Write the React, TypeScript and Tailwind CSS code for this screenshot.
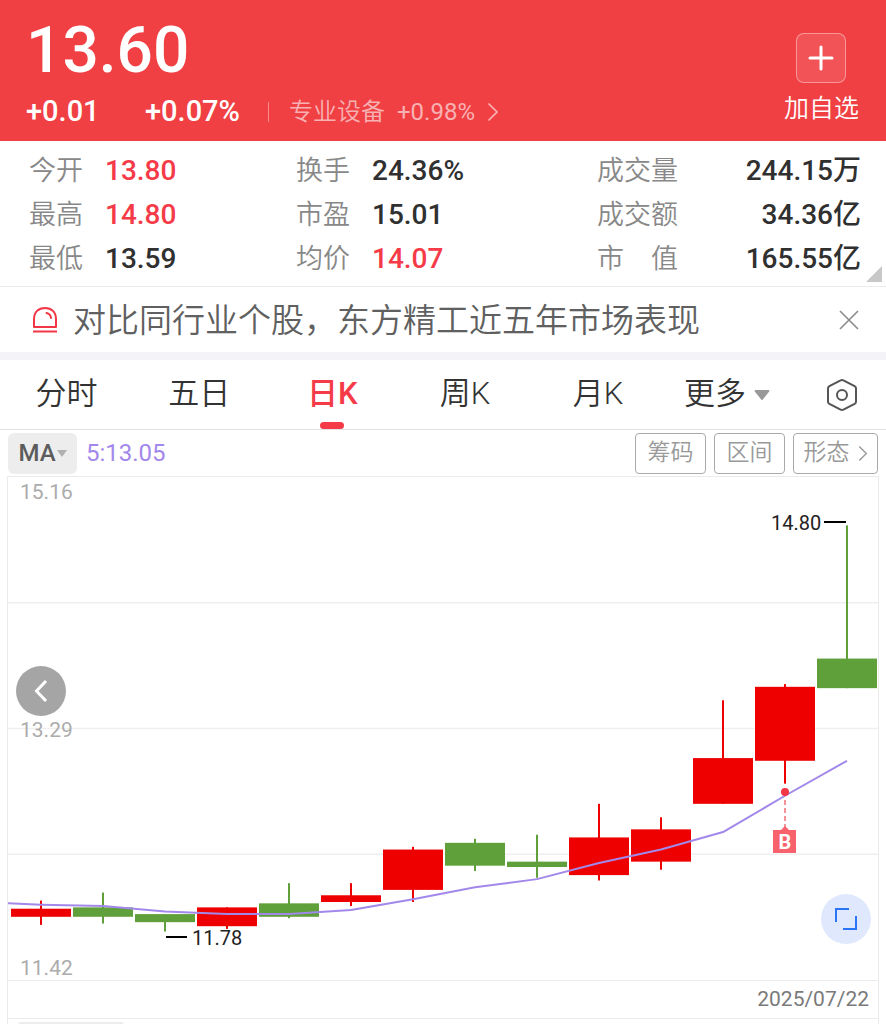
import { useState } from 'react'

interface Candle {
  open: number
  close: number
  high: number
  low: number
}

interface Quote {
  label: string
  value: string
  up?: boolean
}

const QUOTES: Quote[][] = [
  [
    { label: '今开', value: '13.80', up: true },
    { label: '最高', value: '14.80', up: true },
    { label: '最低', value: '13.59' },
  ],
  [
    { label: '换手', value: '24.36%' },
    { label: '市盈', value: '15.01' },
    { label: '均价', value: '14.07', up: true },
  ],
  [
    { label: '成交量', value: '244.15万' },
    { label: '成交额', value: '34.36亿' },
    { label: '市 值', value: '165.55亿' },
  ],
]

const TABS = ['分时', '五日', '日K', '周K', '月K']

const CANDLES: Candle[] = [
  { open: 11.89, close: 11.95, high: 12.01, low: 11.83 },
  { open: 11.96, close: 11.89, high: 12.07, low: 11.84 },
  { open: 11.91, close: 11.85, high: 11.91, low: 11.78 },
  { open: 11.82, close: 11.96, high: 11.96, low: 11.8 },
  { open: 11.99, close: 11.89, high: 12.14, low: 11.88 },
  { open: 12.0, close: 12.05, high: 12.14, low: 11.97 },
  { open: 12.09, close: 12.39, high: 12.41, low: 12.0 },
  { open: 12.44, close: 12.27, high: 12.47, low: 12.23 },
  { open: 12.3, close: 12.26, high: 12.5, low: 12.18 },
  { open: 12.2, close: 12.48, high: 12.73, low: 12.16 },
  { open: 12.3, close: 12.54, high: 12.63, low: 12.24 },
  { open: 12.73, close: 13.07, high: 13.5, low: 12.73 },
  { open: 13.05, close: 13.6, high: 13.62, low: 12.88 },
  { open: 13.81, close: 13.59, high: 14.8, low: 13.59 },
]

const MA5 = [
  11.98, 11.97, 11.93, 11.91, 11.91, 11.94, 12.02, 12.11, 12.17, 12.29, 12.39, 12.52, 12.79, 13.05,
]

// Price scale: 15.16 at the top edge, 11.42 at the bottom one
const CHART_W = 870
const CHART_H = 503
const MAX = 15.16
const MIN = 11.42
const STEP = 62

const y = (price: number) => ((MAX - price) / (MAX - MIN)) * CHART_H
const x = (i: number) => 33 + i * STEP

function KLineChart() {
  const line = MA5.map((p, i) => `${x(i)},${y(p)}`).join(' ')

  return (
    <svg
      viewBox={`0 0 ${CHART_W} ${CHART_H}`}
      className="block w-full h-auto"
      role="img"
      aria-label="日K"
    >
      {[0.25, 0.5, 0.75].map((r) => (
        <line key={r} x1="0" x2={CHART_W} y1={CHART_H * r} y2={CHART_H * r} stroke="#efefef" strokeWidth="1.5" />
      ))}

      <g className="font-['Roboto',sans-serif] text-[21px]" fill="#acacac">
        <text x="12" y="22">15.16</text>
        <text x="12" y="260">13.29</text>
        <text x="12" y="498">11.42</text>
      </g>

      {CANDLES.map((c, i) => {
        const color = c.close > c.open ? '#ee0000' : '#5fa03a'
        const top = y(Math.max(c.open, c.close))
        const bottom = y(Math.min(c.open, c.close))
        return (
          <g key={i} fill={color}>
            <rect x={x(i) - 1} y={y(c.high)} width="2" height={y(c.low) - y(c.high)} />
            <rect x={x(i) - 30} y={top} width="60" height={bottom - top} />
          </g>
        )
      })}

      <polyline points={`0,${y(11.99)} ${line}`} fill="none" stroke="#a288ea" strokeWidth="2" strokeLinejoin="round" />

      {/* High / low callouts */}
      <g className="font-['Roboto',sans-serif] text-[20px]" fill="#222">
        <text x="763" y="53">14.80</text>
        <rect x="816" y="44" width="22" height="2" fill="#000" />
        <text x="184" y="468">11.78</text>
        <rect x="158" y="459" width="21" height="2" fill="#000" />
      </g>

      {/* Buy marker */}
      <circle cx="777" cy="315" r="4" fill="#f23645" />
      <line x1="777" x2="777" y1="323" y2="351" stroke="#f4727b" strokeWidth="1.5" strokeDasharray="5 3" />
      <path d="M766 353h7l4-4 4 4h7v23h-23v-23z" fill="#f8626c" />
      <text x="777" y="372" textAnchor="middle" fill="#fff" className="font-['Roboto',sans-serif] text-[20px] font-bold">
        B
      </text>
    </svg>
  )
}

function BellIcon() {
  return (
    <svg viewBox="0 0 26 28" className="w-[26px] h-7 shrink-0" fill="none" stroke="#f23645" strokeWidth="2">
      <path d="M2 21V13C2 6 6.500 2 13 2s11 4 11 11v8z" strokeLinejoin="round" />
      <path d="M14.500 7c3 .6 4.200 2.300 4.500 5" strokeLinecap="round" />
      <path d="M1 25.500h24" />
    </svg>
  )
}

function Chevron({ className }: { className: string }) {
  return (
    <svg viewBox="0 0 12 20" className={className} fill="none" stroke="currentColor" strokeWidth="1.7">
      <path d="M1.500 1.500 10 10l-8.500 8.500" />
    </svg>
  )
}

export default function App() {
  const [tab, setTab] = useState('日K')
  const [showNotice, setShowNotice] = useState(true)

  return (
    <div className="bg-white font-['Roboto','Noto_Sans_CJK_SC',sans-serif] text-[#333]">
      {/* Price header */}
      <header className="flex justify-between bg-[#f04043] text-white pl-[26px] pr-[27px] h-[141px]">
        <div>
          <h1 className="text-[64px] leading-[66px] font-medium pt-[18px]">13.60</h1>
          <div className="flex items-center h-10 mt-2 text-[29px] font-medium">
            <span className="w-[119px]">+0.01</span>
            <span>+0.07%</span>
            <span className="w-px h-5 bg-white/40 ml-7 mr-5" />
            <a href="#sector" className="flex items-center text-2xl font-[350] text-white/60">
              专业设备
              <span className="ml-3 font-normal">+0.98%</span>
              <Chevron className="w-3 h-5 ml-3" />
            </a>
          </div>
        </div>
        <button className="flex flex-col items-center pt-[33px] text-[25px] leading-[52px] font-[350]">
          <span className="flex items-center justify-center size-[50px] rounded-lg border border-white/40 bg-white/10">
            <svg viewBox="0 0 26 26" className="size-[26px]" stroke="currentColor" strokeWidth="3" strokeLinecap="round">
              <path d="M13 2v22M2 13h22" />
            </svg>
          </span>
          加自选
        </button>
      </header>

      {/* Quote stats */}
      <section className="relative grid grid-cols-[267fr_301fr_264fr] pl-[29px] pr-[25px] pt-2 pb-[5px] border-b border-[#ebebeb]">
        {QUOTES.map((col, n) => (
          <dl key={n}>
            {col.map((q) => (
              <div key={q.label} className={n === 2 ? 'flex justify-between items-center h-11' : 'flex gap-[22px] items-center h-11'}>
                <dt className="text-[27px] leading-10 font-[350] text-[#888]">
                  {q.label.includes(' ') ? (
                    <span className="flex gap-[27px]">
                      {q.label.split(' ').map((s) => (
                        <span key={s}>{s}</span>
                      ))}
                    </span>
                  ) : (
                    q.label
                  )}
                </dt>
                <dd className={q.up ? 'text-[28px] font-medium text-[#f53b48]' : 'text-[28px] font-medium text-[#303030]'}>
                  {q.value}
                </dd>
              </div>
            ))}
          </dl>
        ))}
        <svg viewBox="0 0 16 16" className="absolute right-1 bottom-1 size-4" fill="#c8c8c8">
          <path d="M16 0v16H0z" />
        </svg>
      </section>

      {/* Notice */}
      {showNotice && (
        <div className="flex items-center h-[65px] pl-8 pr-[27px]">
          <BellIcon />
          <a href="#notice" className="ml-[15px] flex-1 pt-[2px] text-[33px] font-[350] text-[#606060]">
            对比同行业个股，东方精工近五年市场表现
          </a>
          <button aria-label="关闭" onClick={() => setShowNotice(false)}>
            <svg viewBox="0 0 20 20" className="size-5" stroke="#8a8a8a" strokeWidth="1.6">
              <path d="M1 1l18 18M19 1 1 19" />
            </svg>
          </button>
        </div>
      )}
      <div className="h-2 bg-[#f3f3f8]" />

      {/* Period tabs */}
      <nav className="grid grid-cols-[3fr_3fr_3fr_3fr_3fr_3fr_2fr] h-[70px] border-b border-[#e2e2e2] text-[31px] font-[350]">
        {TABS.map((t) => (
          <button
            key={t}
            onClick={() => setTab(t)}
            className={t === tab ? 'relative font-medium text-[#f53b48]' : 'relative text-[#333]'}
          >
            {t}
            {t === tab && (
              <span className="absolute bottom-0 left-1/2 -translate-x-1/2 w-6 h-[7px] rounded-full bg-[#f53b48]" />
            )}
          </button>
        ))}
        <button className="flex items-center justify-center gap-2 pr-2">
          更多
          <svg viewBox="0 0 16 12" className="w-4 h-3" fill="#999">
            <path d="M1.500 1h13a1 1 0 0 1 .7 1.600L8.800 10.500a1 1 0 0 1-1.600 0L.8 2.600A1 1 0 0 1 1.500 1z" />
          </svg>
        </button>
        <button aria-label="设置" className="flex items-center justify-center">
          <svg viewBox="0 0 32 34" className="w-8 h-[34px]" fill="none" stroke="#555" strokeWidth="2">
            <path d="M14.600 2.400 3.400 8.200Q2 9 2 10.600v12.800Q2 25 3.400 25.800l11.200 5.800q1.400.7 2.800 0l11.200-5.800Q30 25 30 23.400V10.600Q30 9 28.600 8.200L17.400 2.400q-1.400-.7-2.800 0z" />
            <circle cx="16" cy="17" r="5" />
          </svg>
        </button>
      </nav>

      {/* Indicator bar */}
      <div className="flex items-center h-[46px] pl-2 pr-2">
        <button className="flex items-center justify-center gap-px w-[69px] h-[41px] rounded-md bg-[#ededed] text-2xl font-medium text-[#5c5c5c]">
          MA
          <svg viewBox="0 0 10 7" className="w-[10px] h-[7px]" fill="#b0b0b0">
            <path d="M0 0h10L5 7z" />
          </svg>
        </button>
        <span className="ml-[9px] text-2xl text-[#a288ea]">5:13.05</span>
        <div className="flex gap-2 ml-auto text-[23px] font-[350] text-[#999]">
          <button className="w-[71px] h-[41px] rounded border border-[#aaa]">筹码</button>
          <button className="w-[71px] h-[41px] rounded border border-[#aaa]">区间</button>
          <button className="flex items-center justify-center gap-2 w-[85px] h-[41px] rounded border border-[#aaa]">
            形态
            <Chevron className="w-[10px] h-[17px]" />
          </button>
        </div>
      </div>

      {/* Chart */}
      <main className="mx-[7px] border-x border-t border-[#ebebeb]">
        <div className="relative">
          <KLineChart />
          <button
            aria-label="上一页"
            className="absolute left-2 top-[189px] flex items-center justify-center size-[50px] rounded-full bg-[#a5a5a5]"
          >
            <svg viewBox="0 0 14 22" className="w-[14px] h-[22px]" fill="none" stroke="#fff" strokeWidth="3">
              <path d="M12 1 2.500 11 12 21" />
            </svg>
          </button>
          <button
            aria-label="全屏"
            className="absolute right-[7px] bottom-9 flex items-center justify-center size-[50px] rounded-full bg-[#dfe8fd]"
          >
            <svg viewBox="0 0 24 24" className="size-6" fill="none" stroke="#2b74f6" strokeWidth="2">
              <path d="M2 15V2h13M22 9v13H9" />
            </svg>
          </button>
        </div>
        <div className="flex items-center justify-end h-[38px] pr-[9px] border-t border-[#ebebeb] text-[21px] text-[#7a7a7a]">
          2025/07/22
        </div>
        <div className="border-t border-[#ebebeb] pt-[3px] pl-[10px]">
          <div className="w-[106px] h-[3px] rounded-t-md bg-[#ededed]" />
        </div>
      </main>
    </div>
  )
}
